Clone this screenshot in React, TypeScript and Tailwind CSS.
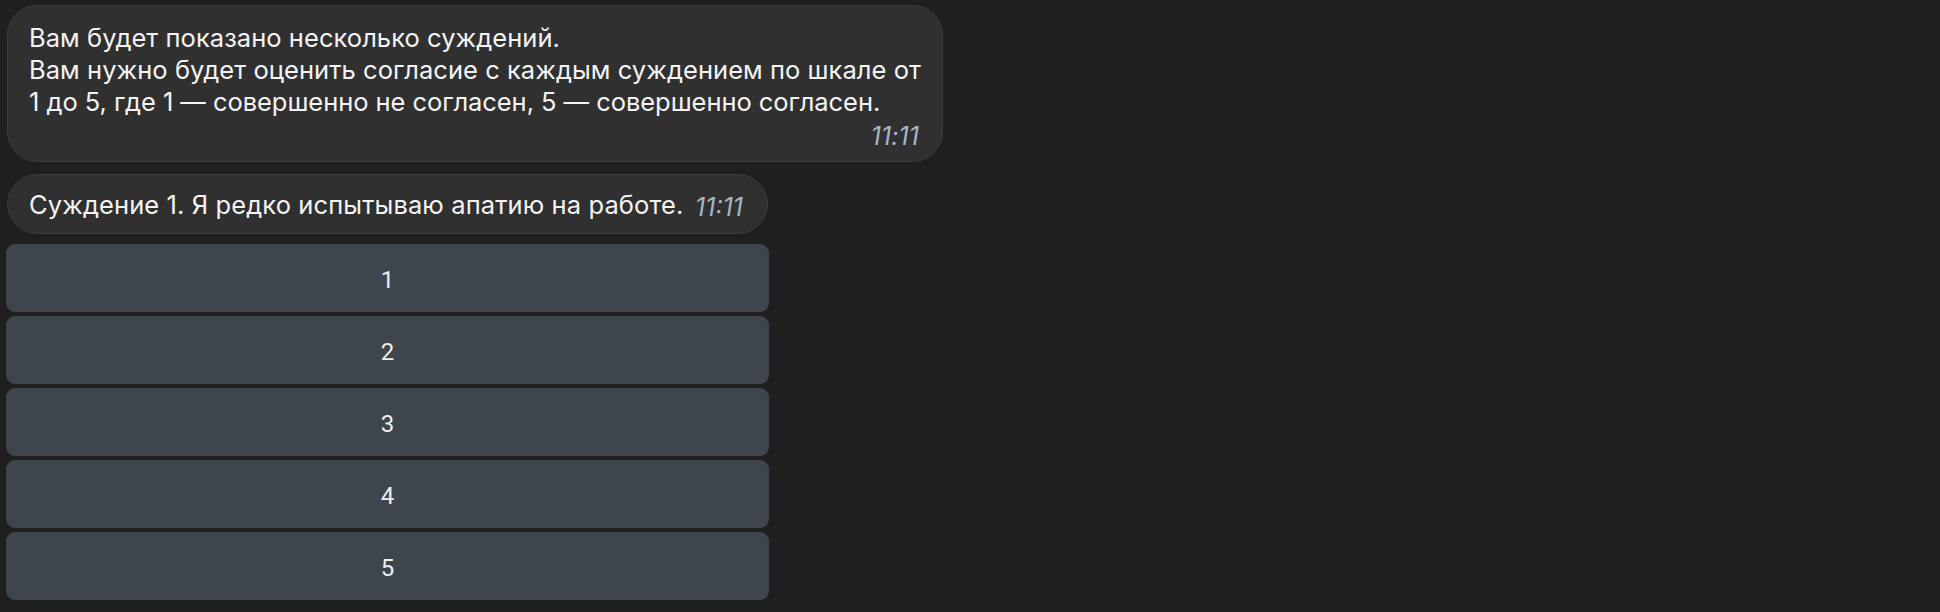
import React from "react";

const msgFont = { fontFamily: "Inter, 'Noto Sans', sans-serif" };

export default function App() {
  return (
    <div className="w-[1940px] h-[612px] bg-[#1f1f1f] overflow-hidden pt-[5px] pl-[6px]" style={msgFont}>
      <div className="flex flex-col items-start">
        <div className="ml-px w-[936px] h-[157px] rounded-[30px] bg-[#303030] border border-[#3b3b3b] pl-[21px] pr-[23px] pt-[16px] text-[#f4f4f4] text-[25.5px] leading-[32px] tracking-[0.05px]">
          <div className="whitespace-nowrap">Вам будет показано несколько суждений.</div>
          <div className="whitespace-nowrap">Вам нужно будет оценить согласие с каждым суждением по шкале от</div>
          <div className="whitespace-nowrap tracking-[-0.05px]">1 до 5, где 1 — совершенно не согласен, 5 — совершенно согласен.</div>
          <div className="flex justify-end mt-[4px]">
            <span className="italic text-[25px] leading-[28px] text-[#a3b6ca]">11:11</span>
          </div>
        </div>
        <div className="ml-px mt-[12px] w-[761px] h-[60px] rounded-full bg-[#303030] border border-[#3b3b3b] pl-[21px] pr-[24px] flex items-center justify-between text-[#f4f4f4]">
          <span className="text-[25.5px] leading-[32px] whitespace-nowrap tracking-[0.1px] mt-px">Суждение 1. Я редко испытываю апатию на работе.</span>
          <span className="italic text-[25px] leading-[28px] text-[#a3b6ca] mt-[5px]">11:11</span>
        </div>
        <div className="mt-[10px] w-[763px] flex flex-col gap-[4px]">
          {["1", "2", "3", "4", "5"].map((n) => (
            <button
              key={n}
              className="h-[68px] w-full rounded-[9px] bg-[#3e454c] text-[#eceef0] text-[24px] pt-[4px] flex items-center justify-center"
              style={{ fontFamily: "Roboto, 'Liberation Sans', sans-serif" }}
            >
              {n}
            </button>
          ))}
        </div>
      </div>
    </div>
  );
}
